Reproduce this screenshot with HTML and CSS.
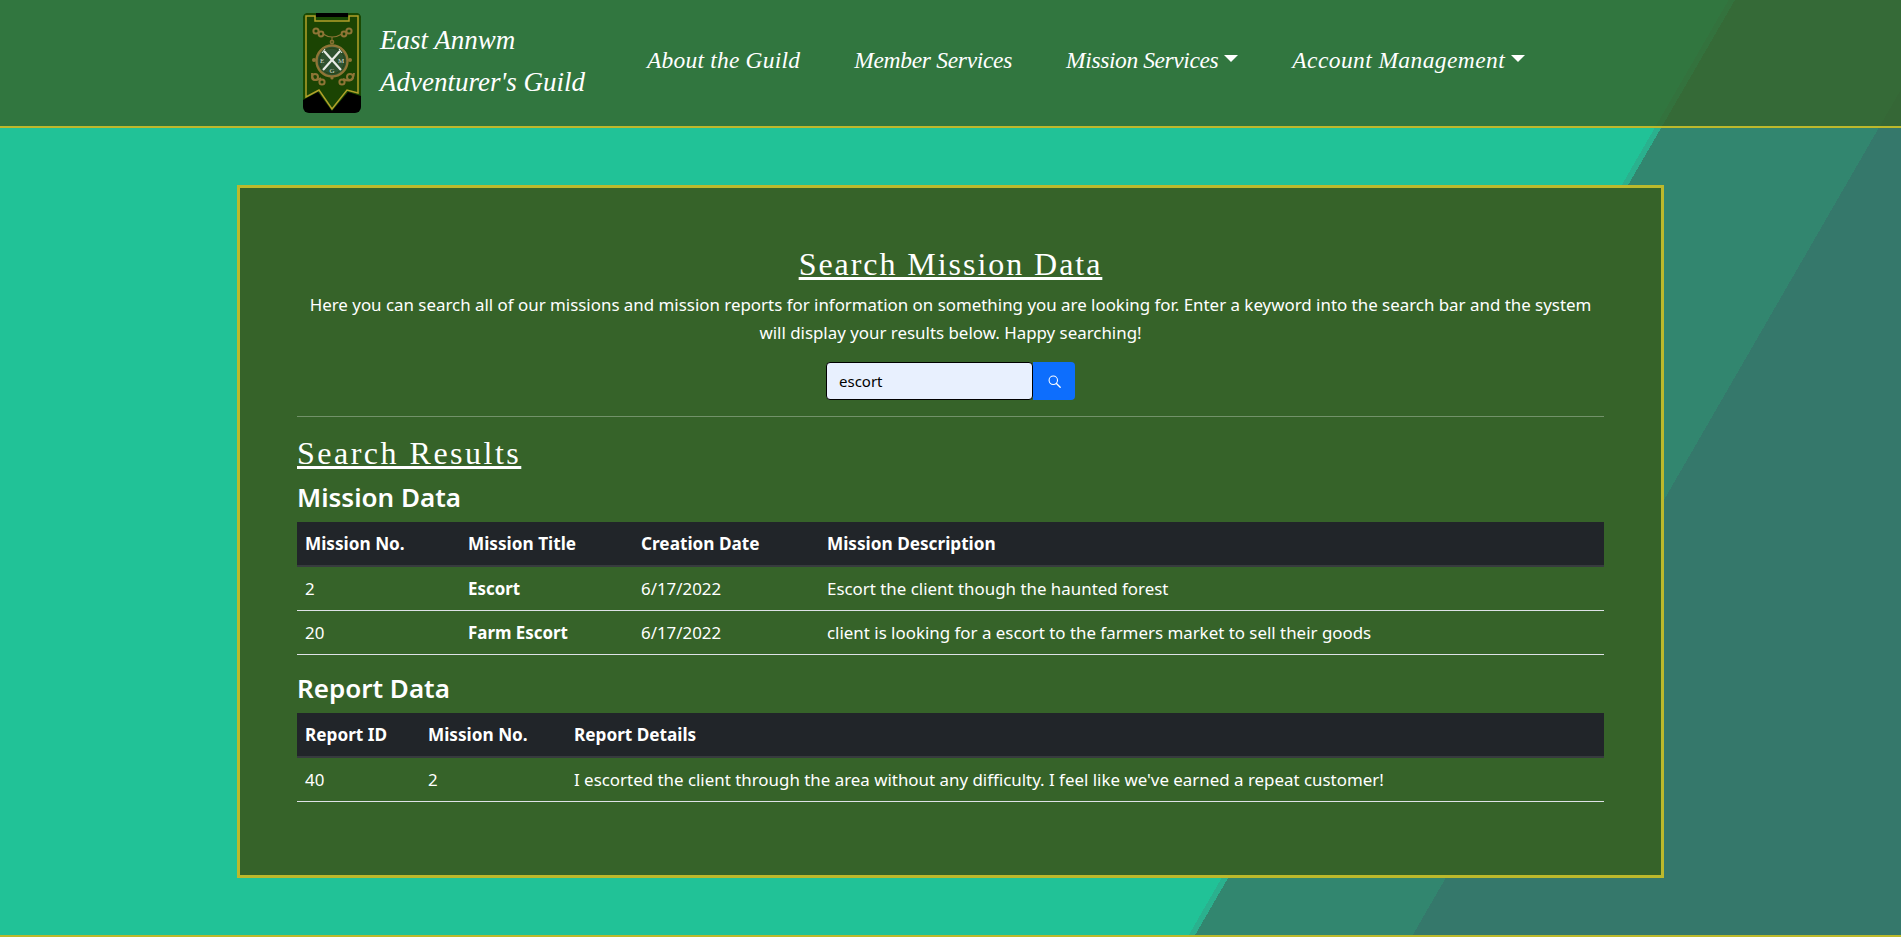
FILE: index.html
```html
<!DOCTYPE html>
<html lang="en">

<head>
    <meta charset="UTF-8">
    <meta name="viewport" content="width=device-width, initial-scale=1.0">
    <title>Search Mission Data</title>
    <link rel="stylesheet" href="styles.css">
</head>

<body>

    <header class="site-header">
        <a class="brand" href="#">
            <svg class="brand-logo" viewBox="0 0 58 100" role="img" aria-label="Guild banner">
                <rect width="58" height="100" rx="6" fill="#000" />
                <path d="M0 5 Q0 0 5 0 H13 V4 H45 V0 H53 Q58 0 58 5 V83 L45 79 L29 98 L15 79 L0 87 Z" fill="#1a4a04" />
                <path d="M3 3 H12 V8 H46 V3 H55 V80 L44 77 L29 96 L16 77 L3 84 Z" fill="#1b4403" stroke="#b3a02a" stroke-width="1.5" />
                <!-- top knots and chain -->
                <g fill="none" stroke="#8f7536" stroke-width="2">
                    <circle cx="13" cy="18" r="2.6" />
                    <circle cx="18" cy="21" r="2.4" />
                    <circle cx="41" cy="21" r="2.4" />
                    <circle cx="46" cy="18" r="2.6" />
                    <path d="M20 21 Q29 27 39 21 M29 24 V31" stroke-width="1.1" />
                    <circle cx="29" cy="29" r="1.8" stroke-width="1.1" />
                    <circle cx="12" cy="64" r="3" />
                    <circle cx="19" cy="69" r="2.6" />
                    <path d="M9 60 Q9 71 18 65" />
                    <circle cx="47" cy="64" r="3" />
                    <circle cx="39" cy="69" r="2.6" />
                    <path d="M51 60 Q50 71 40 66" />
                </g>
                <!-- medallion -->
                <circle cx="29" cy="48" r="15.5" fill="#2f5230" stroke="#8f7536" stroke-width="2.4" />
                <circle cx="29" cy="48" r="12.8" fill="none" stroke="#26400f" stroke-width="0.8" />
                <circle cx="11" cy="47" r="2" fill="#8f7536" />
                <circle cx="47" cy="47" r="2" fill="#8f7536" />
                <circle cx="29" cy="65" r="1.6" fill="#8f7536" />
                <path d="M21 38 L38 57 M37 38 L20 57" stroke="#e8ece6" stroke-width="2.2" />
                <path d="M22 36 L19 40 M36 36 L39 40" stroke="#e8ece6" stroke-width="1" />
                <text class="logo-letter" x="17" y="50">E</text>
                <text class="logo-letter" x="35" y="50">M</text>
                <text class="logo-letter" x="26.5" y="60">G</text>
            </svg>
            <span class="brand-name">East Annwm<br>Adventurer's Guild</span>
        </a>

        <nav class="main-nav">
            <a class="nav-link nav-about" href="#">About the Guild</a>
            <a class="nav-link nav-member" href="#">Member Services</a>
            <a class="nav-link nav-mission has-caret" href="#">Mission Services</a>
            <a class="nav-link nav-account has-caret" href="#">Account Management</a>
        </nav>
    </header>

    <main class="panel">
        <h2 class="section-title title-main">Search Mission Data</h2>
        <p class="intro">Here you can search all of our missions and mission reports for information on something you are looking for. Enter a keyword into the search bar and the system will display your results below. Happy searching!</p>

        <form class="search-form">
            <input class="search-input" type="text" value="escort">
            <button class="search-button" type="button" aria-label="Search">
                <svg class="search-icon" viewBox="0 0 16 16">
                    <circle cx="6.5" cy="6.5" r="5.2" fill="none" stroke="#fff" stroke-width="1.3" />
                    <path d="M10.4 10.4 L15 15" stroke="#fff" stroke-width="1.6" stroke-linecap="round" />
                </svg>
            </button>
        </form>

        <hr class="divider">

        <h2 class="section-title title-results">Search Results</h2>

        <h3 class="sub-title">Mission Data</h3>
        <table class="data-table">
            <thead>
                <tr>
                    <th class="w-163">Mission No.</th>
                    <th class="w-173">Mission Title</th>
                    <th class="w-186">Creation Date</th>
                    <th>Mission Description</th>
                </tr>
            </thead>
            <tbody>
                <tr>
                    <td>2</td>
                    <td class="strong">Escort</td>
                    <td>6/17/2022</td>
                    <td>Escort the client though the haunted forest</td>
                </tr>
                <tr>
                    <td>20</td>
                    <td class="strong">Farm Escort</td>
                    <td>6/17/2022</td>
                    <td>client is looking for a escort to the farmers market to sell their goods</td>
                </tr>
            </tbody>
        </table>

        <h3 class="sub-title">Report Data</h3>
        <table class="data-table">
            <thead>
                <tr>
                    <th class="w-123">Report ID</th>
                    <th class="w-146">Mission No.</th>
                    <th>Report Details</th>
                </tr>
            </thead>
            <tbody>
                <tr>
                    <td>40</td>
                    <td>2</td>
                    <td>I escorted the client through the area without any difficulty. I feel like we've earned a repeat customer!</td>
                </tr>
            </tbody>
        </table>
    </main>

    <footer class="site-footer"></footer>

</body>

</html>
```

FILE: styles.css
```css
* {
    box-sizing: border-box;
}

body {
    margin: 0;
    font-family: "Noto Sans", "Open Sans", sans-serif;
    font-size: 16.9px;
    line-height: 27px;
    color: #fff;
    background-color: #21c297;
    background-image: linear-gradient(120deg,
            #21c297 1497px,
            #2ab18e 1497px,
            #2ab18e 1502.5px,
            #32866f 1502.5px,
            #32866f 1691px,
            #35786b 1691px);
}

a {
    color: #fff;
    text-decoration: none;
}

/* header */

.site-header {
    display: flex;
    align-items: center;
    height: 128px;
    padding-left: 303px;
    background-color: rgba(54, 99, 41, 0.8);
    border-bottom: 2px solid #bcb92c;
}

.brand {
    display: flex;
    align-items: center;
}

.brand-logo {
    width: 58px;
    height: 100px;
    flex: none;
}

.logo-letter {
    font-family: "Liberation Serif", serif;
    font-size: 7px;
    fill: #d8ddd4;
}

.brand-name {
    margin: 0 0 4px 19px;
    width: 240px;
    font-family: "Liberation Serif", serif;
    font-style: italic;
    font-size: 27px;
    line-height: 42px;
}

.main-nav {
    display: flex;
    align-items: center;
    margin: 0 0 6px 0;
    padding-left: 27px;
    font-family: "Liberation Serif", serif;
    font-style: italic;
    font-size: 23.5px;
}

.nav-link {
    white-space: nowrap;
}

.nav-about {
    margin-right: 54px;
    letter-spacing: 0.2px;
}

.nav-member {
    margin-right: 54px;
    letter-spacing: -0.3px;
}

.nav-mission {
    margin-right: 54px;
    letter-spacing: -0.4px;
}

.nav-account {
    letter-spacing: 0.4px;
}

.has-caret::after {
    content: "";
    display: inline-block;
    margin-left: 6px;
    vertical-align: 6px;
    border-top: 7px solid #fff;
    border-left: 7px solid transparent;
    border-right: 7px solid transparent;
}

/* panel */

.panel {
    width: 1427px;
    margin: 57px auto;
    padding: 57px;
    background-color: #366329;
    border: 3px solid #bcb92c;
}

.section-title {
    margin: 0 0 8px;
    font-family: "Liberation Serif", serif;
    font-size: 32px;
    font-weight: 400;
    line-height: 38px;
    text-decoration: underline;
}

.title-main {
    text-align: center;
    letter-spacing: 1.95px;
}

.title-results {
    letter-spacing: 2.5px;
}

.intro {
    margin: 0 0 15px;
    padding: 0 10px;
    line-height: 28px;
    text-align: center;
}

.search-form {
    display: flex;
    justify-content: center;
}

.search-input {
    width: 207px;
    height: 38px;
    padding: 0 12px;
    font-family: inherit;
    font-size: 15px;
    color: #000;
    background-color: #e8f0fe;
    border: 1px solid #000;
    border-radius: 4px;
}

.search-button {
    display: flex;
    align-items: center;
    justify-content: center;
    width: 42px;
    height: 38px;
    padding: 0;
    background-color: #0d6efd;
    border: 0;
    border-radius: 0 4px 4px 0;
}

.search-icon {
    width: 13px;
    height: 13px;
}

.divider {
    height: 1px;
    margin: 16px 0 17px;
    background-color: rgba(255, 255, 255, 0.3);
    border: 0;
}

.sub-title {
    margin: 0 0 8px;
    font-size: 26px;
    font-weight: 600;
    line-height: 34px;
}

/* tables */

.data-table {
    width: 100%;
    margin-bottom: 16px;
    border-collapse: collapse;
    table-layout: fixed;
}

.data-table th {
    padding: 8px;
    text-align: left;
    font-size: 17.2px;
    font-weight: 700;
    background-color: #212529;
    border-bottom: 2px solid #373b3e;
}

.data-table td {
    padding: 8px;
    border-bottom: 1px solid #dee2e6;
}

.strong {
    font-weight: 700;
}

.w-163 {
    width: 163px;
}

.w-173 {
    width: 173px;
}

.w-186 {
    width: 186px;
}

.w-123 {
    width: 123px;
}

.w-146 {
    width: 146px;
}

.site-footer {
    height: 2px;
    background-color: #bcb92c;
}
```
